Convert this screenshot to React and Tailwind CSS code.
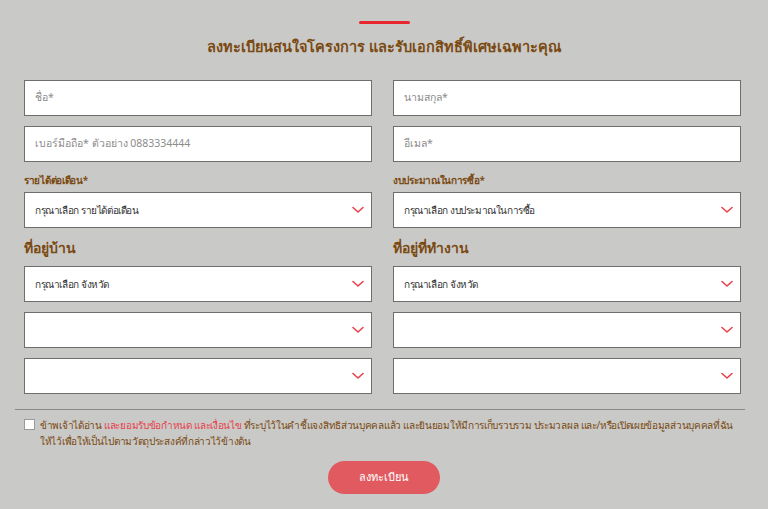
import React from "react";

function Chevron() {
  return (
    <svg width="12" height="8" viewBox="0 0 12 8" className="shrink-0">
      <path d="M1 1.5 L6 6 L11 1.5" fill="none" stroke="#e8414b" strokeWidth="1.6" strokeLinecap="round" strokeLinejoin="round" />
    </svg>
  );
}

function Input({ placeholder }) {
  return (
    <div className="h-[36px] bg-white border border-[#6e6e6e] flex items-center px-[10px] text-[10.5px] text-[#8c8c8c]">
      {placeholder}
    </div>
  );
}

function Select({ text }) {
  return (
    <div className="h-[36px] bg-white border border-[#6e6e6e] flex items-center justify-between pl-[10px] pr-[7px] text-[10px] tracking-[-0.4px] text-[#333]">
      <span>{text}</span>
      <Chevron />
    </div>
  );
}

export default function App() {
  return (
    <div
      className="w-[768px] h-[509px] bg-[#c9c9c7] overflow-hidden flex flex-col items-center"
      style={{ fontFamily: '"Noto Sans", "Liberation Sans", sans-serif' }}
    >
      <div className="mt-[21px] w-[51px] h-[3px] rounded-full bg-[#e8262e]" />
      <div className="mt-[10px] text-[14.5px] font-semibold text-[#7a4a12] leading-[24px]">
        ลงทะเบียนสนใจโครงการ และรับเอกสิทธิ์พิเศษเฉพาะคุณ
      </div>

      <div className="mt-[22px] self-start ml-[24px] w-[717px] grid grid-cols-2 gap-x-[21px]">
        <div className="flex flex-col">
          <Input placeholder="ชื่อ*" />
          <div className="mt-[10px]"><Input placeholder="เบอร์มือถือ* ตัวอย่าง 0883334444" /></div>
          <div className="mt-[7px] h-[23px] flex items-center text-[10px] tracking-[-0.3px] font-semibold text-[#7a4a12]">รายได้ต่อเดือน*</div>
          <Select text="กรุณาเลือก รายได้ต่อเดือน" />
          <div className="mt-[6px] h-[32px] pb-[5px] flex items-center text-[14px] font-semibold text-[#7a4a12]">ที่อยู่บ้าน</div>
          <Select text="กรุณาเลือก จังหวัด" />
          <div className="mt-[10px]"><Select text="" /></div>
          <div className="mt-[10px]"><Select text="" /></div>
        </div>
        <div className="flex flex-col">
          <Input placeholder="นามสกุล*" />
          <div className="mt-[10px]"><Input placeholder="อีเมล*" /></div>
          <div className="mt-[7px] h-[23px] flex items-center text-[10px] tracking-[-0.3px] font-semibold text-[#7a4a12]">งบประมาณในการซื้อ*</div>
          <Select text="กรุณาเลือก งบประมาณในการซื้อ" />
          <div className="mt-[6px] h-[32px] pb-[5px] flex items-center text-[14px] font-semibold text-[#7a4a12]">ที่อยู่ที่ทำงาน</div>
          <Select text="กรุณาเลือก จังหวัด" />
          <div className="mt-[10px]"><Select text="" /></div>
          <div className="mt-[10px]"><Select text="" /></div>
        </div>
      </div>

      <div className="mt-[15px] self-start ml-[15px] w-[730px] h-px bg-[#8a8a8a]" />

      <div className="mt-[7px] self-start ml-[24px] w-[722px] flex items-start gap-[5px] text-[10px] tracking-[-0.3px] leading-[16px] text-[#7a4a12]">
        <div className="mt-[2px] w-[11px] h-[11px] bg-white border border-[#9a9a9a] shrink-0" />
        <div>
          ข้าพเจ้าได้อ่าน <span className="text-[#e8414b]">และยอมรับข้อกำหนด และเงื่อนไข</span> ที่ระบุไว้ในคำชี้แจงสิทธิส่วนบุคคลแล้ว และยินยอมให้มีการเก็บรวบรวม ประมวลผล และ/หรือเปิดเผยข้อมูลส่วนบุคคลที่ฉัน
          <br />
          ให้ไว้เพื่อให้เป็นไปตามวัตถุประสงค์ที่กล่าวไว้ข้างต้น
        </div>
      </div>

      <div className="mt-[12px] w-[112px] h-[33px] rounded-full bg-[#e05a5f] text-white text-[11px] flex items-center justify-center">
        ลงทะเบียน
      </div>
    </div>
  );
}
